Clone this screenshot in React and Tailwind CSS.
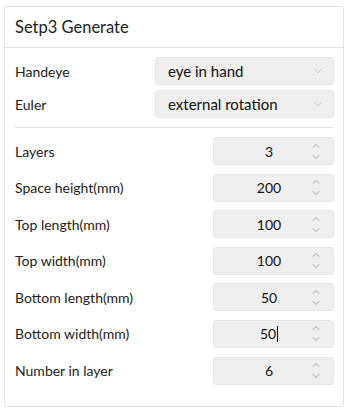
import { ChevronDown, ChevronUp } from 'lucide-react'

const rows = [
  { label: 'Layers', value: '3' },
  { label: 'Space height(mm)', value: '200' },
  { label: 'Top length(mm)', value: '100' },
  { label: 'Top width(mm)', value: '100' },
  { label: 'Bottom length(mm)', value: '50' },
  { label: 'Bottom width(mm)', value: '50', focused: true },
  { label: 'Number in layer', value: '6' },
]

function SelectBox({ value }) {
  return (
    <div className="flex h-[26px] w-[177px] items-center justify-between rounded-[3px] bg-[#efefef] pl-3 pr-2 shadow-[0_0_0_1px_#e6e6e6]">
      <span className="text-[15px] leading-none text-[#111]">{value}</span>
      <ChevronDown size={14} strokeWidth={1.1} className="text-[#b0b0b0]" />
    </div>
  )
}

function NumberBox({ value, focused }) {
  return (
    <div className="flex h-[26px] w-[119px] items-center rounded-[3px] bg-[#efefef] shadow-[0_0_0_1px_#e6e6e6]">
      <div className="flex flex-1 items-center justify-end pr-[14px] text-[14px] text-[#111]">
        <span className="w-[40px] text-center">
          {value}
          {focused ? <span className="ml-px inline-block h-[16px] w-px translate-y-[3px] bg-[#111]" /> : null}
        </span>
      </div>
      <div className="flex w-[30px] flex-col items-center justify-center pr-[4px]">
        <ChevronUp size={12} strokeWidth={1.2} className="-mb-[1px] text-[#777]" />
        <ChevronDown size={12} strokeWidth={1.2} className="text-[#777]" />
      </div>
    </div>
  )
}

export default function App() {
  return (
    <div className="min-h-[415px] w-[345px] bg-white pl-[4px] pt-[6px]" style={{ fontFamily: 'Lato, "Noto Sans", sans-serif' }}>
      <div className="h-[401px] w-[340px] rounded-[2px] border border-[#e4e4e4] bg-white">
        <div className="flex h-[41px] items-center border-b border-[#e4e4e4] px-[10px] text-[16.5px] text-[#222]">
          Setp3 Generate
        </div>
        <div className="px-[10px]">
          <div className="flex flex-col gap-[7px] pt-[10px]">
            <div className="flex items-center justify-between">
              <span className="text-[14px] text-[#222]">Handeye</span>
              <SelectBox value="eye in hand" />
            </div>
            <div className="flex items-center justify-between">
              <span className="text-[14px] text-[#222]">Euler</span>
              <SelectBox value="external rotation" />
            </div>
          </div>
          <div className="mt-[10px] h-px w-[318px] bg-[#e4e4e4]" />
          <div className="flex flex-col gap-[10.6px] pt-[10px]">
            {rows.map((r) => (
              <div key={r.label} className="flex items-center justify-between">
                <span className="text-[14px] text-[#222]">{r.label}</span>
                <NumberBox value={r.value} focused={r.focused} />
              </div>
            ))}
          </div>
        </div>
      </div>
    </div>
  )
}
